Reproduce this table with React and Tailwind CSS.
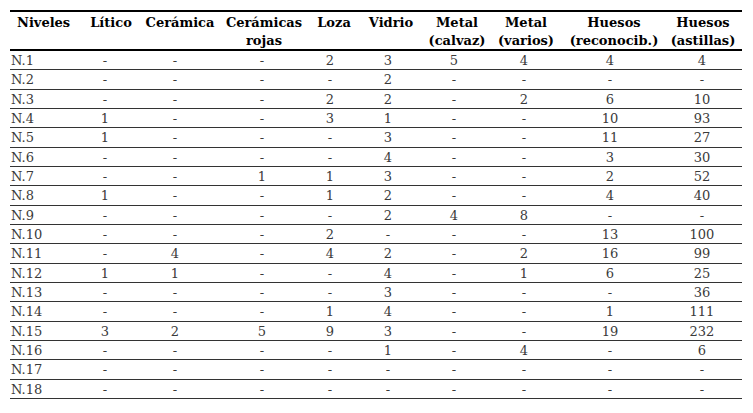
const rows = [
  ["N.1", "-", "-", "-", "2", "3", "5", "4", "4", "4"],
  ["N.2", "-", "-", "-", "-", "2", "-", "-", "-", "-"],
  ["N.3", "-", "-", "-", "2", "2", "-", "2", "6", "10"],
  ["N.4", "1", "-", "-", "3", "1", "-", "-", "10", "93"],
  ["N.5", "1", "-", "-", "-", "3", "-", "-", "11", "27"],
  ["N.6", "-", "-", "-", "-", "4", "-", "-", "3", "30"],
  ["N.7", "-", "-", "1", "1", "3", "-", "-", "2", "52"],
  ["N.8", "1", "-", "-", "1", "2", "-", "-", "4", "40"],
  ["N.9", "-", "-", "-", "-", "2", "4", "8", "-", "-"],
  ["N.10", "-", "-", "-", "2", "-", "-", "-", "13", "100"],
  ["N.11", "-", "4", "-", "4", "2", "-", "2", "16", "99"],
  ["N.12", "1", "1", "-", "-", "4", "-", "1", "6", "25"],
  ["N.13", "-", "-", "-", "-", "3", "-", "-", "-", "36"],
  ["N.14", "-", "-", "-", "1", "4", "-", "-", "1", "111"],
  ["N.15", "3", "2", "5", "9", "3", "-", "-", "19", "232"],
  ["N.16", "-", "-", "-", "-", "1", "-", "4", "-", "6"],
  ["N.17", "-", "-", "-", "-", "-", "-", "-", "-", "-"],
  ["N.18", "-", "-", "-", "-", "-", "-", "-", "-", "-"],
];

const headers = [
  ["Lítico"],
  ["Cerámica"],
  ["Cerámicas", "rojas"],
  ["Loza"],
  ["Vidrio"],
  ["Metal", "(calvaz)"],
  ["Metal", "(varios)"],
  ["Huesos", "(reconocib.)"],
  ["Huesos", "(astillas)"],
];

export default function App() {
  return (
    <div className="w-[753px] h-[413px] bg-white pt-[10px] pl-[10px] font-[DejaVu_Serif,serif]">
      <div className="w-[732px] border-t-2 border-black">
        <div className="grid grid-cols-[68px_66px_72px_96px_44px_70px_62px_76px_100px_78px] h-[39px] pt-[1.5px] border-b-2 border-black text-[13px] leading-[18px] font-bold text-black">
          <div className="pl-[7px] whitespace-nowrap">Niveles</div>
          {headers.map((h, i) => (
            <div key={i} className="flex flex-col items-center whitespace-nowrap">
              {h.map((t, j) => (
                <span key={j}>{t}</span>
              ))}
            </div>
          ))}
        </div>
        {rows.map((r, i) => (
          <div
            key={i}
            className="grid grid-cols-[60px_70px_70px_104px_32px_84px_48px_92px_80px_92px] h-[19.33px] border-b border-[#333] text-[13px] leading-[19.33px] text-[#3a3a3a]"
          >
            <div className="pl-[1px] whitespace-nowrap">{r[0]}</div>
            {r.slice(1).map((v, j) => (
              <div
                key={j}
                className={
                  j === 8
                    ? "pl-[12px] flex justify-center whitespace-nowrap"
                    : "flex justify-center whitespace-nowrap"
                }
              >
                <span className="text-center w-full">{v}</span>
              </div>
            ))}
          </div>
        ))}
      </div>
    </div>
  );
}
